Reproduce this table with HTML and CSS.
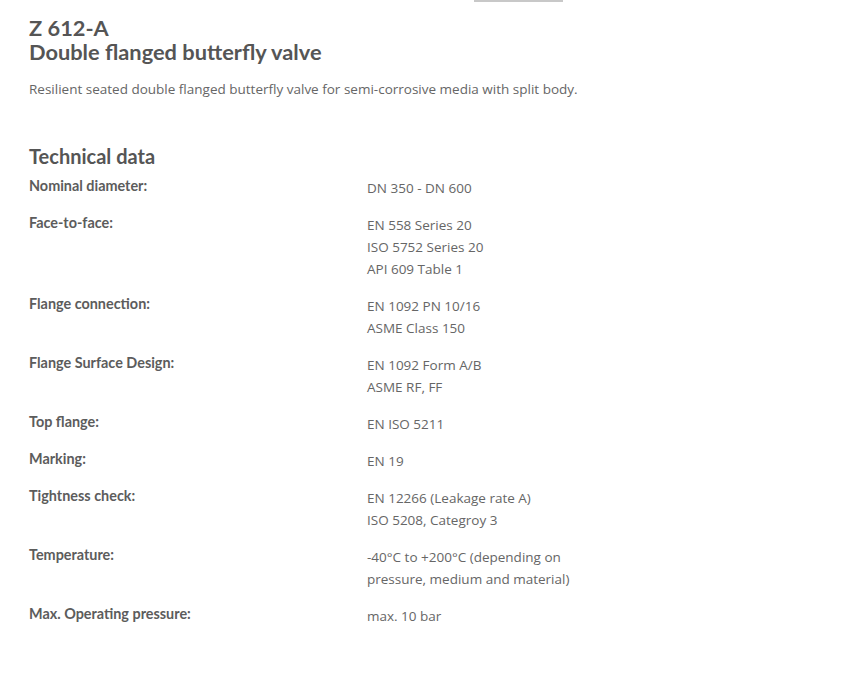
FILE: index.html
```html
<!DOCTYPE html>
<html>
<head>
<meta charset="utf-8">
<link rel="stylesheet" href="styles.css">
</head>
<body>
<div class="topbar"></div>
<main class="page">
  <h1 class="title">Z 612-A<br>Double flanged butterfly valve</h1>
  <p class="intro">Resilient seated double flanged butterfly valve for semi-corrosive media with split body.</p>
  <h2 class="section">Technical data</h2>
  <div class="specs">
    <div class="row"><div class="label">Nominal diameter:</div><div class="value">DN 350 - DN 600</div></div>
    <div class="row"><div class="label">Face-to-face:</div><div class="value">EN 558 Series 20<br>ISO 5752 Series 20<br>API 609 Table 1</div></div>
    <div class="row"><div class="label">Flange connection:</div><div class="value">EN 1092 PN 10/16<br>ASME Class 150</div></div>
    <div class="row"><div class="label">Flange Surface Design:</div><div class="value">EN 1092 Form A/B<br>ASME RF, FF</div></div>
    <div class="row"><div class="label">Top flange:</div><div class="value">EN ISO 5211</div></div>
    <div class="row"><div class="label">Marking:</div><div class="value">EN 19</div></div>
    <div class="row"><div class="label">Tightness check:</div><div class="value">EN 12266 (Leakage rate A)<br>ISO 5208, Categroy 3</div></div>
    <div class="row"><div class="label">Temperature:</div><div class="value">-40°C to +200°C (depending on<br>pressure, medium and material)</div></div>
    <div class="row"><div class="label">Max. Operating pressure:</div><div class="value">max. 10 bar</div></div>
  </div>
</main>
</body>
</html>
```
FILE: styles.css
```css
html, body { margin: 0; padding: 0; background: #fff; }
.topbar {
  position: absolute;
  top: 0; left: 474px;
  width: 89px; height: 2px;
  background: #c8c8c8;
}
.page {
  padding: 16px 0 0 29px;
  color: #666;
}
.title {
  margin: 0;
  font-family: Lato, sans-serif;
  font-weight: 700;
  font-size: 21.8px;
  line-height: 24px;
  color: #555;
}
.intro {
  margin: 14px 0 0;
  font-family: "Open Sans", sans-serif;
  font-size: 13.5px;
  line-height: 22px;
  color: #666;
}
.section {
  margin: 44px 0 0;
  font-family: Lato, sans-serif;
  font-weight: 700;
  font-size: 20px;
  line-height: 24px;
  color: #555;
}
.specs { margin-top: 9px; display: flex; flex-direction: column; gap: 15px; }
.row { display: grid; grid-template-columns: 338px 1fr; }
.label {
  font-family: Lato, sans-serif;
  font-weight: 700;
  font-size: 14.4px;
  line-height: 17px;
  color: #5c5c5c;
}
.value {
  font-family: "Open Sans", sans-serif;
  font-size: 13.5px;
  line-height: 22px;
  color: #666;
}
```
